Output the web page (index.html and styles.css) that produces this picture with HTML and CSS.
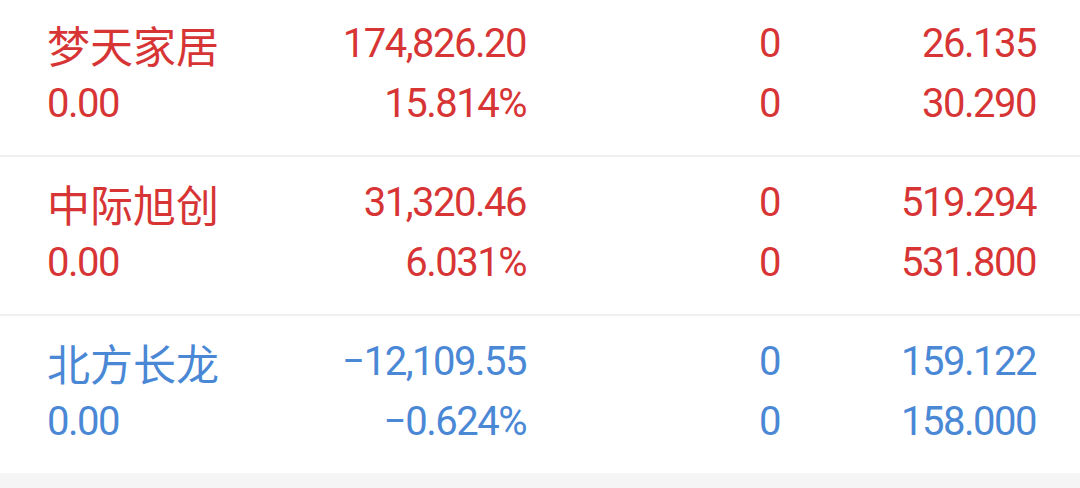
FILE: index.html
```html
<!DOCTYPE html>
<html lang="zh-CN">
<head>
<meta charset="utf-8">
<link rel="stylesheet" href="styles.css">
</head>
<body>
<div class="list">
  <div class="row up">
    <div class="name">梦天家居</div>
    <div class="num">174,826.20</div>
    <div class="num">0</div>
    <div class="num">26.135</div>
    <div class="sub">0.00</div>
    <div class="num">15.814%</div>
    <div class="num">0</div>
    <div class="num">30.290</div>
  </div>
  <div class="row up">
    <div class="name">中际旭创</div>
    <div class="num">31,320.46</div>
    <div class="num">0</div>
    <div class="num">519.294</div>
    <div class="sub">0.00</div>
    <div class="num">6.031%</div>
    <div class="num">0</div>
    <div class="num">531.800</div>
  </div>
  <div class="row down">
    <div class="name">北方长龙</div>
    <div class="num">−12,109.55</div>
    <div class="num">0</div>
    <div class="num">159.122</div>
    <div class="sub">0.00</div>
    <div class="num">−0.624%</div>
    <div class="num">0</div>
    <div class="num">158.000</div>
  </div>
</div>
</body>
</html>
```
FILE: styles.css
```css
html, body {
  margin: 0;
  padding: 0;
  background: #f5f5f5;
  width: 1080px;
  height: 488px;
  overflow: hidden;
}
.list {
  margin-top: -2px;
  display: flex;
  flex-direction: column;
  gap: 2px;
  background: #f0f0f0;
}
.row {
  background: #ffffff;
  display: grid;
  grid-template-columns: 240px 239px 254px 256px;
  grid-auto-rows: 60px;
  padding: 16px 44px 21px 47px;
  font-family: Roboto, "Noto Sans CJK SC", sans-serif;
  font-size: 40px;
  line-height: 60px;
}
.up { color: #d73535; }
.down { color: #4a88d6; }
.name {
  font-family: "Noto Sans CJK SC", sans-serif;
  font-size: 43px;
  font-weight: 400;
  letter-spacing: 0;
}
.num, .sub {
  letter-spacing: -1.5px;
  white-space: nowrap;
}
.num { text-align: right; }
.sub { text-align: left; }
```
